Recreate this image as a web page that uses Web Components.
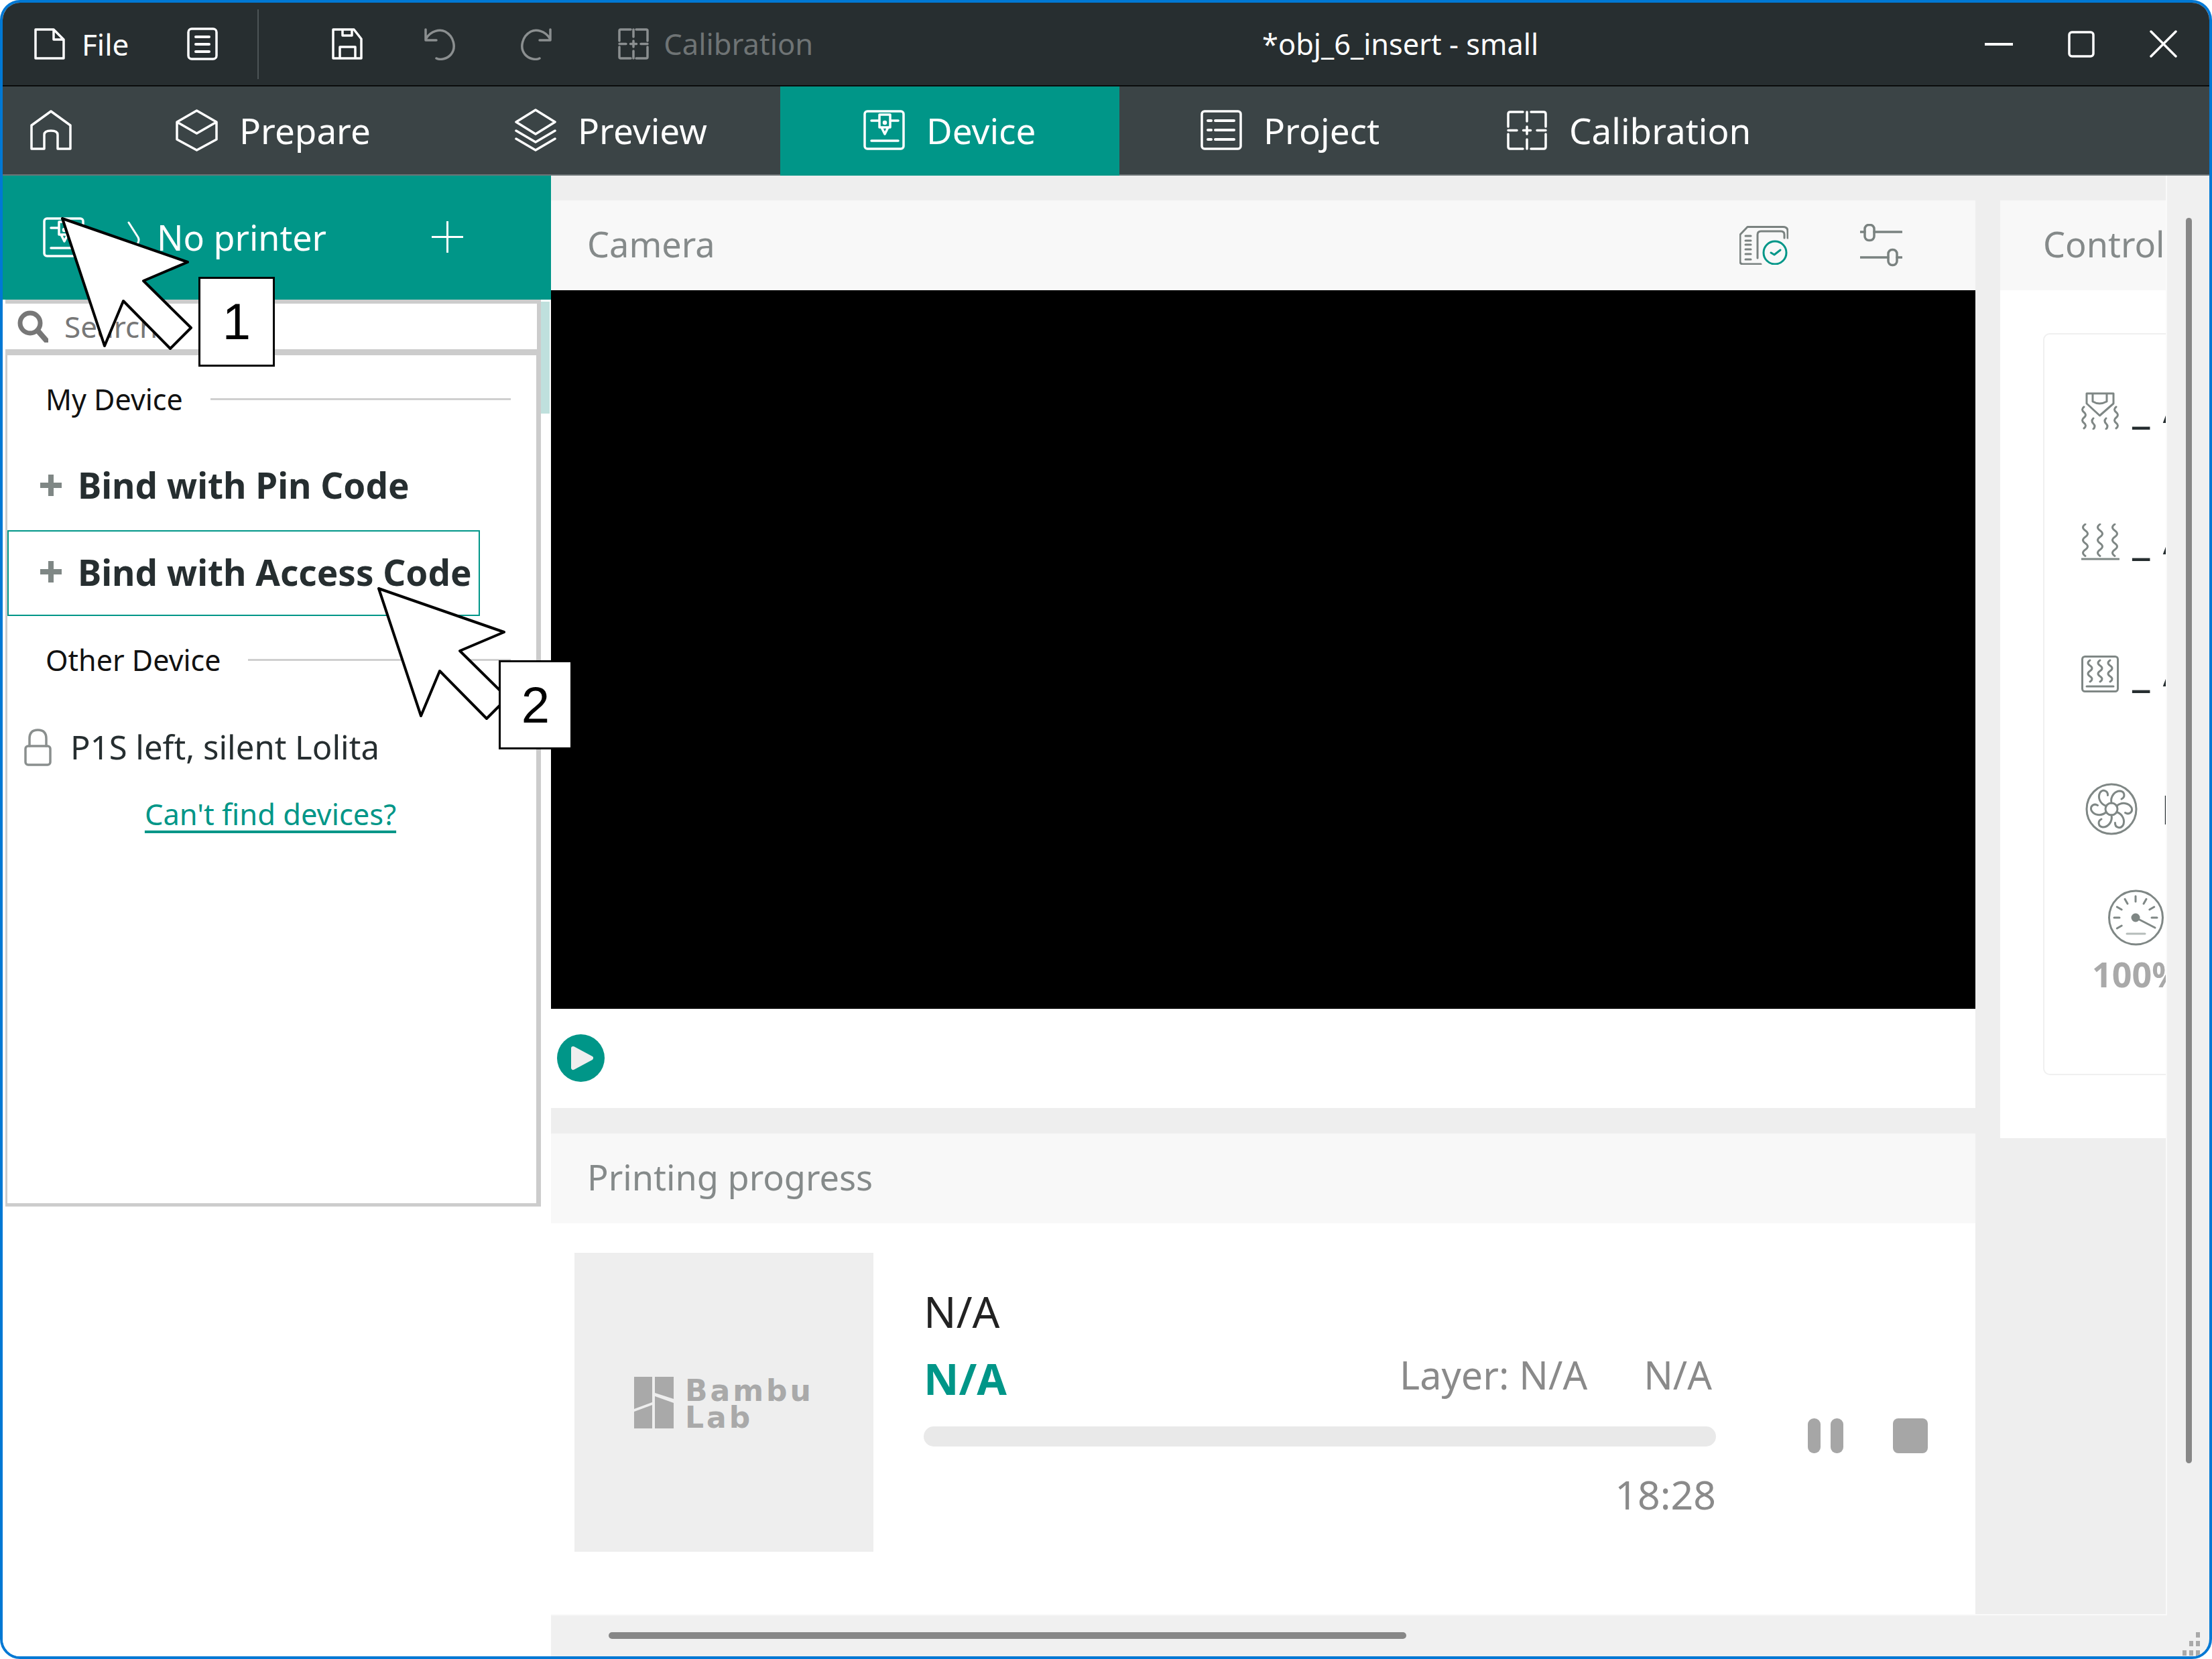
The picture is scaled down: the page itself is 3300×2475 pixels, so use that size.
<!DOCTYPE html>
<html>
<head>
<meta charset="utf-8">
<title>Device</title>
<style>
  html, body { margin: 0; padding: 0; background: #fff; }
  body { position: relative; width: 3300px; height: 2475px; overflow: hidden; font-family: "Noto Sans", sans-serif; }
</style>
</head>
<body>
<app-window>
  <title-bar slot="title"></title-bar>
  <nav-bar slot="nav"></nav-bar>
  <device-sidebar slot="side"></device-sidebar>
  <device-workspace slot="main"></device-workspace>
</app-window>
<callout-pointer x="93" y="326" num="1" box-x="203" box-y="87" box-w="114" box-h="134"></callout-pointer>
<callout-pointer x="565" y="878" num="2" box-x="179" box-y="107" box-w="110" box-h="133"></callout-pointer>

<script>
// Icons are drawn in a viewBox the size of the icon, stroke follows currentColor
const squiggle = (x, y, n, step = 8, amp = 5) => {
  let d = `M${x} ${y}`;
  for (let i = 0; i < n; i++) d += ` q${i % 2 ? amp : -amp} ${step / 2} 0 ${step}`;
  return d;
};
const fanBlades = () => {
  let out = '';
  for (let i = 0; i < 6; i++) {
    out += `<path transform="rotate(${i * 60} 39 39)" d="M39 30 C37 20 44 12 52 12 C59 13 60 21 54 24"/>`;
  }
  return out;
};
const gaugeTicks = () => {
  let out = '';
  for (let a = -90; a <= 90; a += 30) {
    out += `<path transform="rotate(${a} 42 42)" d="M42 10 V18"/>`;
  }
  out += '<path transform="rotate(-120 42 42)" d="M42 10 V18"/>';
  return out;
};
const ICONS = {
  file: '<path d="M3 3 H30 L45 18 V46 H3 Z M30 3 V18 H45"/>',
  doclist: '<rect x="2" y="2" width="42" height="45" rx="5"/><path d="M13 14 H33 M13 25 H33 M13 36 H33" stroke-width="4"/>',
  save: '<path d="M3 3 H34 L45 17 V46 H3 Z M17 3 V12 H31 V3 M13 46 V29 H36 V46"/>',
  undo: '<path d="M4 3 V19 H20 M5 16 C12 5 25 2 33 6 C46 13 50 30 42 40 C36 47 26 49 20 46"/>',
  redo: '<g transform="translate(48 0) scale(-1 1)"><path d="M4 3 V19 H20 M5 16 C12 5 25 2 33 6 C46 13 50 30 42 40 C36 47 26 49 20 46"/></g>',
  calib: '<path d="M20 3 H5 Q3 3 3 5 V20 M28 3 H43 Q45 3 45 5 V20 M3 29 V44 Q3 46 5 46 H20 M45 29 V44 Q45 46 43 46 H28 M24 3 V14 M24 35 V46 M3 24.500 H13 M35 24.500 H45 M24 20 V29 M19.500 24.500 H28.500"/>',
  calibBig: '<path d="M25 3 H6 Q3 3 3 6 V25 M37 3 H56 Q59 3 59 6 V25 M3 36 V55 Q3 58 6 58 H25 M59 36 V55 Q59 58 56 58 H37 M31 3 V17 M31 44 V58 M3 30.500 H16 M46 30.500 H59 M31 25 V36 M25.500 30.500 H36.500"/>',
  home: '<path d="M2 23 L31 2 L60 23 V58 H41 V37 Q41 31 31 31 Q21 31 21 37 V58 H2 Z"/>',
  cube: '<path d="M31.500 2 L61 19 V45 L31.500 61 L2 45 V19 Z M2 19 L31.500 36 L61 19"/>',
  layers: '<path d="M31 2 L60 20 L31 38 L2 20 Z M2 33 L31 50 L60 33 M2 45 L31 62 L60 45"/>',
  device: '<rect x="2" y="2" width="58" height="56" rx="4"/><path d="M12 16 H24 M40 16 H52 M24 7 H40 V26 H24 Z M27 26 L32 36 L37 26 Z M12 46 H52"/><circle cx="32" cy="19" r="1.500"/>',
  project: '<rect x="2" y="2" width="58" height="56" rx="4"/><path d="M11 16 H16 M22 16 H50 M11 30 H16 M22 30 H50 M11 44 H16 M22 44 H50" stroke-width="4"/>',
  min: '<path d="M0 3 H42" stroke-width="4"/>',
  max: '<rect x="2" y="2" width="36" height="36" rx="4"/>',
  close: '<path d="M2 2 L39 39 M39 2 L2 39"/>',
  chevron: '<path d="M2 2 L16 24 Q18 28 16 32 L6 46"/>',
  plus: '<path d="M23.500 0 V47 M0 23.500 H47"/>',
  plus2: '<path d="M18 2 V34 M2 18 H34" stroke-linecap="butt"/>',
  sliders: '<path d="M0 12 H7 M21 12 H62 M0 50 H42 M55 50 H62"/><rect x="7" y="1.500" width="14" height="23" rx="6"/><rect x="42" y="38.500" width="13" height="23" rx="6"/>',
  camcheck: '<path d="M32 57 H5 Q1 57 1 53 V13 L12 1.500 H65 Q72 1.500 72 8 V18 M27 48 V13 Q27 8 32 8 H62 Q67 8 67 13 V18"/><path d="M9 15 H17 M9 22 H17 M9 28 H17 M9 35 H17 M9 42 H17 M9 50 H17"/><circle cx="53" cy="40" r="17" style="stroke:#009688"/><path d="M47 40 L52 43 L61 36" style="stroke:#009688"/>',
  search: '<circle cx="20" cy="19" r="15" stroke-width="7"/><path d="M31 30 L45 46" stroke-width="8"/>',
  lock: '<rect x="2" y="26" width="37" height="28" rx="4"/><path d="M8 26 V15 Q8 2 20.500 2 Q33 2 33 15 V26"/>',
  nozzle: `<path d="M8 2 H48 V17 L27.500 35 L8 17 Z M17 2 V14 Q27 20 38 14 V2"/><path d="${squiggle(4, 22, 4, 8, 5)} ${squiggle(18, 39, 2, 8, 4)} ${squiggle(37, 39, 2, 8, 4)} ${squiggle(52, 22, 4, 8, 5)}"/>`,
  heat: `<path d="${squiggle(6, 1, 5, 9.500, 7)} ${squiggle(28, 1, 5, 9.500, 7)} ${squiggle(50, 1, 5, 9.500, 7)} M0 53 H56"/>`,
  bed: `<rect x="1.500" y="1.500" width="53" height="52" rx="4"/><path d="${squiggle(13, 7, 4, 8, 6)} ${squiggle(28, 7, 4, 8, 6)} ${squiggle(43, 7, 4, 8, 6)} M8 46 H48"/>`,
  fan: `<circle cx="39" cy="39" r="37"/><circle cx="39" cy="39" r="9"/>${fanBlades()}`,
  gauge: `<circle cx="42.500" cy="42" r="40"/><circle cx="42" cy="42" r="5" fill="currentColor"/><path d="M42 42 L71 57"/>${gaugeTicks()}<path d="M29 66 H56" style="stroke:#b5bcba"/>`,
};

class BambuIcon extends HTMLElement {
  connectedCallback() {
    const w = this.getAttribute('w');
    const h = this.getAttribute('h');
    const sw = this.getAttribute('sw') || 3.5;
    this.attachShadow({ mode: 'open' }).innerHTML = `
      <style>:host { display: block; flex: none; width: ${w}px; height: ${h}px; } svg { display: block; }</style>
      <svg width="${w}" height="${h}" viewBox="0 0 ${w} ${h}" fill="none" stroke="currentColor"
        stroke-width="${sw}" stroke-linejoin="round" stroke-linecap="round">${ICONS[this.getAttribute('name')]}</svg>`;
  }
}

class AppWindow extends HTMLElement {
  constructor() {
    super();
    this.attachShadow({ mode: 'open' }).innerHTML = `
      <style>
        :host { display: block; width: 3300px; height: 2475px; box-sizing: border-box; border: solid #0078d4; border-width: 4px;
          border-radius: 30px; overflow: hidden; background: #f0f0f0; }
        .body { display: flex; height: 2209px; }
      </style>
      <slot name="title"></slot>
      <slot name="nav"></slot>
      <div class="body"><slot name="side"></slot><slot name="main"></slot></div>`;
  }
}

class TitleBar extends HTMLElement {
  constructor() {
    super();
    this.attachShadow({ mode: 'open' }).innerHTML = `
      <style>
        :host { display: flex; align-items: center; height: 123px; box-sizing: content-box; padding-left: 46px; background: #272e30;
          border-bottom: 2px solid #0a0c0c; color: #fff; font-size: 44px; line-height: 1; }
        .sep { width: 2px; height: 104px; background: #4c5456; margin: 0 108px 0 59px; }
        .off { color: #8b8f90; }
        .dis { color: #6f7475; margin-left: 21px; font-size: 43.500px; }
        .title { margin-left: 670px; font-size: 43.300px; white-space: pre; }
        .win { display: flex; align-items: center; margin-left: auto; padding-right: 48px; }
      </style>
      <bambu-icon name="file" w="47" h="49"></bambu-icon>
      <span style="margin-left:25px;margin-right:87px">File</span>
      <bambu-icon name="doclist" w="46" h="49"></bambu-icon>
      <div class="sep"></div>
      <bambu-icon name="save" w="48" h="49"></bambu-icon>
      <bambu-icon class="off" style="margin-left:89px" name="undo" w="48" h="49"></bambu-icon>
      <bambu-icon class="off" style="margin-left:98px" name="redo" w="48" h="49"></bambu-icon>
      <bambu-icon class="off" style="margin-left:96px" name="calib" w="48" h="49"></bambu-icon>
      <span class="dis">Calibration</span>
      <span class="title">*obj_6_insert - small</span>
      <div class="win">
        <bambu-icon name="min" w="42" h="6"></bambu-icon>
        <bambu-icon style="margin-left:82px" name="max" w="40" h="40"></bambu-icon>
        <bambu-icon style="margin-left:82px" name="close" w="41" h="41"></bambu-icon>
      </div>`;
  }
}

class NavTab extends HTMLElement {
  connectedCallback() {
    const active = this.hasAttribute('active');
    this.attachShadow({ mode: 'open' }).innerHTML = `
      <style>
        :host { display: flex; align-items: center; gap: 32px; width: ${this.getAttribute('tw')}px; height: 133px; box-sizing: border-box;
          padding: 0 0 3px ${this.getAttribute('pl') || 0}px; color: #fff; font-size: 53px; line-height: 1;
          background: ${active ? '#009688' : 'transparent'}; }
      </style>
      <bambu-icon name="${this.getAttribute('icon')}" w="${this.getAttribute('iw') || 62}" h="${this.getAttribute('ih') || 60}"></bambu-icon>
      <slot></slot>`;
  }
}

class NavBar extends HTMLElement {
  constructor() {
    super();
    this.attachShadow({ mode: 'open' }).innerHTML = `
      <style>:host { display: flex; height: 133px; background: #3b4446; box-shadow: inset 0 -2px 0 #6c7476; }</style>
      <nav-tab icon="home" pl="41" tw="134"></nav-tab>
      <nav-tab icon="cube" iw="63" ih="63" pl="124" tw="522">Prepare</nav-tab>
      <nav-tab icon="layers" ih="64" pl="108" tw="504">Preview</nav-tab>
      <nav-tab icon="device" active pl="124" tw="506">Device</nav-tab>
      <nav-tab icon="project" pl="121" tw="453">Project</nav-tab>
      <nav-tab icon="calibBig" pl="124" tw="600">Calibration</nav-tab>`;
  }
}

class SectionLabel extends HTMLElement {
  constructor() {
    super();
    this.attachShadow({ mode: 'open' }).innerHTML = `
      <style>
        :host { display: flex; align-items: center; height: 130px; padding: 0 38px 0 57px; color: #111; font-size: 43px; line-height: 1; }
        i { flex: 1; height: 3px; margin-left: 41px; background: #cfcfcf; }
      </style>
      <slot></slot><i></i>`;
  }
}

class BindRow extends HTMLElement {
  connectedCallback() {
    this.attachShadow({ mode: 'open' }).innerHTML = `
      <style>
        :host { display: flex; align-items: center; box-sizing: border-box; width: 705px; height: ${this.getAttribute('rh')}px; padding: 0 0 4px 47px;
          border: 2px solid transparent; color: #262e30; font-size: 53px; font-weight: 700; line-height: 1; white-space: nowrap; }
        :host([selected]) { border-color: #009688; }
        .plus { color: #7f8785; margin-right: 22px; margin-left: -2px; }
      </style>
      <bambu-icon class="plus" name="plus2" w="36" h="36" sw="8"></bambu-icon>
      <slot></slot>`;
  }
}

class DeviceSidebar extends HTMLElement {
  constructor() {
    super();
    this.attachShadow({ mode: 'open' }).innerHTML = `
      <style>
        :host { display: block; flex: none; width: 818px; height: 100%; background: #fff; position: relative; }
        .head { display: flex; align-items: center; height: 185px; box-sizing: border-box; padding: 0 0 2px 60px; background: #009688;
          color: #fff; font-size: 52px; line-height: 1; }
        .drop { display: flex; }
        .col { flex: none; width: 799px; margin-left: 4px; background: #ccc; padding-top: 6px; box-sizing: border-box; padding-bottom: 5px; height: 1353px; }
        .search { display: flex; align-items: center; height: 68px; margin: 0 6px 0 0; padding-left: 17px; background: #fff; color: #777;
          font-size: 44px; line-height: 1; }
        .search span { margin-left: 24px; }
        .list { height: 1265px; margin: 9px 7px 0 3px; background: #fff; }
        .lock { display: flex; align-items: center; height: 131px; padding-left: 25px; color: #262e30; font-size: 49px; line-height: 1; }
        .lock span { margin-left: 28px; }
        .help { display: block; text-align: center; width: 785px; margin-top: 13px; color: #009688; font-size: 43.500px; text-decoration: underline; text-underline-offset: 8px; line-height: 1; }
        .thumb { flex: none; width: 13px; height: 167px; margin-top: 3px; background: #bfe0dd; }
      </style>
      <div class="head">
        <bambu-icon name="device" w="62" h="60"></bambu-icon>
        <bambu-icon style="margin-left:64px" name="chevron" w="20" h="48" sw="3"></bambu-icon>
        <span style="margin-left:24px">No printer</span>
        <bambu-icon style="margin-left:157px" name="plus" w="47" h="47" sw="3"></bambu-icon>
      </div>
      <div class="drop">
        <div class="col">
          <div class="search"><bambu-icon name="search" w="47" h="48"></bambu-icon><span>Search</span></div>
          <div class="list">
            <section-label>My Device</section-label>
            <bind-row rh="131">Bind with Pin Code</bind-row>
            <bind-row rh="128" selected>Bind with Access Code</bind-row>
            <section-label>Other Device</section-label>
            <div class="lock"><bambu-icon style="color:#8a8f8e" name="lock" w="41" h="56"></bambu-icon><span>P1S left, silent Lolita</span></div>
            <a class="help">Can't find devices?</a>
          </div>
        </div>
        <div class="thumb"></div>
      </div>`;
  }
}

class PanelBox extends HTMLElement {
  connectedCallback() {
    this.shadowRoot.getElementById('t').textContent = this.getAttribute('heading');
    this.shadowRoot.querySelector('header').style.paddingLeft = (this.getAttribute('pad') || 54) + 'px';
  }
  constructor() {
    super();
    this.attachShadow({ mode: 'open' }).innerHTML = `
      <style>
        :host { display: block; background: #fff; overflow: hidden; }
        header { display: flex; align-items: center; height: 134px; box-sizing: border-box; padding-bottom: 3px; background: #f8f8f8;
          color: #858a8a; font-size: 52.300px; line-height: 1; white-space: nowrap; }
        ::slotted([slot=actions]) { margin-left: auto; }
      </style>
      <header><span id="t"></span><slot name="actions"></slot></header>
      <slot></slot>`;
  }
}

class CameraView extends HTMLElement {
  constructor() {
    super();
    this.attachShadow({ mode: 'open' }).innerHTML = `
      <style>
        :host { display: block; }
        .video { height: 1072px; background: #000; }
        .bar { display: flex; align-items: center; height: 148px; padding-left: 9px; padding-bottom: 2px; box-sizing: border-box; }
        .actions { display: flex; align-items: center; }
      </style>
      <panel-box heading="Camera">
        <div slot="actions" class="actions" style="color:#7a8280;padding-right:109px;padding-top:3px">
          <bambu-icon name="camcheck" w="73" h="58" sw="3"></bambu-icon>
          <bambu-icon style="margin-left:107px" name="sliders" w="63" h="64" sw="3.500"></bambu-icon>
        </div>
        <div class="video"></div>
        <div class="bar">
          <svg width="71" height="71" viewBox="0 0 71 71"><circle cx="35.500" cy="35.500" r="35.500" fill="#009688"/>
            <path d="M24 21 L51 35.500 L24 50 Z" fill="#eee" stroke="#eee" stroke-width="6" stroke-linejoin="round"/></svg>
        </div>
      </panel-box>`;
  }
}

class PrintProgress extends HTMLElement {
  constructor() {
    super();
    this.attachShadow({ mode: 'open' }).innerHTML = `
      <style>
        :host { display: block; margin-top: 38px; }
        .body { display: flex; height: 583px; box-sizing: border-box; padding: 44px 0 0 35px; }
        .thumb { display: flex; align-items: center; justify-content: center; flex: none; width: 446px; height: 446px; background: #eeeeee; color: #a9a9a9; }
        .brand { margin-left: 17px; padding-top: 6px; font-family: "DejaVu Sans", sans-serif; font-weight: 700; font-size: 44px; line-height: 40px; letter-spacing: 4px; }
        .info { flex: none; width: 1182px; margin-left: 75px; color: #222; line-height: 1; }
        .name { font-size: 64px; margin-top: 56px; }
        .row { display: flex; align-items: center; margin-top: 34px; color: #8a8a8a; font-size: 57.500px; }
        .row span { padding-bottom: 8px; }
        .row .pct { margin-right: auto; padding: 0; color: #009688; font-size: 64.500px; font-weight: 700; }
        .track { height: 30px; margin-top: 39px; border-radius: 15px; background: #e9e9e9; }
        .time { margin-top: 42px; text-align: right; color: #8a8a8a; font-size: 59px; }
        .ctl { display: flex; flex: none; margin: 247px 0 0 137px; height: 52px; }
        .pause { width: 19px; height: 52px; border-radius: 9px; background: #a6a6a6; margin-right: 15px; }
        .stop { width: 52px; height: 52px; border-radius: 8px; background: #a6a6a6; margin-left: 74px; }
      </style>
      <panel-box heading="Printing progress">
        <div class="body">
          <div class="thumb">
            <svg width="59" height="77" viewBox="0 0 59 77" fill="#a9a9a9">
              <polygon points="0,0 27,0 27,38 0,48"/><polygon points="0,52 27,42 27,77 0,77"/>
              <polygon points="31,0 59,0 59,33 31,24"/><polygon points="31,29 59,39 59,77 31,77"/>
            </svg>
            <div class="brand">Bambu<br>Lab</div>
          </div>
          <div class="info">
            <div class="name">N/A</div>
            <div class="row"><span class="pct">N/A</span><span>Layer: N/A</span><span style="margin-left:84px;margin-right:6px">N/A</span></div>
            <div class="track"></div>
            <div class="time">18:28</div>
          </div>
          <div class="ctl"><div class="pause"></div><div class="pause" style="margin-right:0"></div><div class="stop"></div></div>
        </div>
      </panel-box>`;
  }
}

class TempRow extends HTMLElement {
  connectedCallback() {
    this.attachShadow({ mode: 'open' }).innerHTML = `
      <style>
        :host { display: flex; align-items: flex-start; box-sizing: border-box; height: ${this.getAttribute('rh')}px; padding-left: 55px; color: #7f8785; }
        .u { display: flex; align-items: baseline; margin: -10px 0 0 19px; color: #262e30; line-height: 64px; white-space: nowrap; }
        .d { font-size: 64px; font-weight: 700; }
        .s { margin-left: 19px; font-size: 50px; }
      </style>
      <bambu-icon name="${this.getAttribute('icon')}" w="57" h="56" sw="3"></bambu-icon>
      <div class="u"><span class="d">_</span><span class="s">/</span></div>`;
  }
}

class ControlPanel extends HTMLElement {
  constructor() {
    super();
    this.attachShadow({ mode: 'open' }).innerHTML = `
      <style>
        :host { display: block; flex: none; width: 249px; height: 1399px; overflow: hidden; }
        panel-box { height: 100%; width: 600px; }
        .card { box-sizing: border-box; width: 500px; height: 1107px; margin: 64px 0 0 64px; border: 2px solid #f0f0f0; border-radius: 10px; padding-top: 86px; color: #7f8785; }
        .fan { display: flex; align-items: center; height: 78px; padding-left: 61px; }
        .n { margin-left: 35px; color: #262e30; font-size: 60px; line-height: 1; }
        .gauge { padding-left: 94px; margin-top: 81px; }
        .pct { margin: 16px 0 0 71px; color: #a9a9a9; font-size: 52px; font-weight: 700; line-height: 1; white-space: nowrap; }
      </style>
      <panel-box heading="Control" pad="64">
        <div class="card">
          <temp-row icon="nozzle" rh="196"></temp-row>
          <temp-row icon="heat" rh="197"></temp-row>
          <temp-row icon="bed" rh="190"></temp-row>
          <div class="fan"><bambu-icon name="fan" w="78" h="78" sw="3"></bambu-icon><span class="n">N/A</span></div>
          <div class="gauge"><bambu-icon name="gauge" w="85" h="84" sw="3"></bambu-icon></div>
          <div class="pct">100%</div>
        </div>
      </panel-box>`;
  }
}

class DeviceWorkspace extends HTMLElement {
  constructor() {
    super();
    this.attachShadow({ mode: 'open' }).innerHTML = `
      <style>
        :host { display: grid; flex: none; width: 2470px; height: 100%; grid-template-columns: 2411px 59px; grid-template-rows: 2148px 61px; background: #f0f0f0; }
        .view { display: flex; gap: 37px; padding-top: 37px; box-sizing: border-box; background: #eeeeee; overflow: hidden; border-right: 2px solid #fafafa; border-bottom: 2px solid #fafafa; }
        .left { flex: none; width: 2125px; }
        .v i { display: block; width: 9px; height: 1858px; margin: 63px 0 0 28px; background: #878787; border-radius: 5px; }
        .h i { display: block; width: 1190px; height: 10px; margin: 25px 0 0 86px; background: #878787; border-radius: 5px; }
        .grip { display: grid; grid-template-columns: repeat(3, 6px); gap: 4px 4px; margin: 25px 0 0 23px; }
        .grip b { width: 6px; height: 8px; background: #a9a9a9; }
      </style>
      <div class="view">
        <div class="left"><camera-view></camera-view><print-progress></print-progress></div>
        <control-panel></control-panel>
      </div>
      <div class="v"><i></i></div>
      <div class="h"><i></i></div>
      <div class="grip"><span></span><span></span><b></b><span></span><b></b><b></b><b></b><b></b><b></b></div>`;
  }
}

class CalloutPointer extends HTMLElement {
  connectedCallback() {
    const a = (n) => this.getAttribute(n);
    this.attachShadow({ mode: 'open' }).innerHTML = `
      <style>
        :host { position: absolute; left: ${a('x')}px; top: ${a('y')}px; width: 0; height: 0; }
        svg { position: absolute; left: 0; top: 0; overflow: visible; }
        .box { position: absolute; left: ${a('box-x')}px; top: ${a('box-y')}px; width: ${a('box-w')}px; height: ${a('box-h')}px; box-sizing: border-box;
          display: flex; align-items: center; justify-content: center; background: #fff; border: 3px solid #000; color: #000;
          font-family: "Liberation Sans", Arial, sans-serif; font-size: 76px; line-height: 1; }
      </style>
      <svg width="200" height="200"><polygon points="0,0 187,65 121,93 192,163 161,194 91,123 63,190" fill="#fff" stroke="#000" stroke-width="4" stroke-linejoin="round"/></svg>
      <div class="box">${a('num')}</div>`;
  }
}

customElements.define('bambu-icon', BambuIcon);
customElements.define('nav-tab', NavTab);
customElements.define('title-bar', TitleBar);
customElements.define('nav-bar', NavBar);
customElements.define('section-label', SectionLabel);
customElements.define('bind-row', BindRow);
customElements.define('device-sidebar', DeviceSidebar);
customElements.define('panel-box', PanelBox);
customElements.define('camera-view', CameraView);
customElements.define('print-progress', PrintProgress);
customElements.define('temp-row', TempRow);
customElements.define('control-panel', ControlPanel);
customElements.define('device-workspace', DeviceWorkspace);
customElements.define('callout-pointer', CalloutPointer);
customElements.define('app-window', AppWindow);
</script>
</body>
</html>
